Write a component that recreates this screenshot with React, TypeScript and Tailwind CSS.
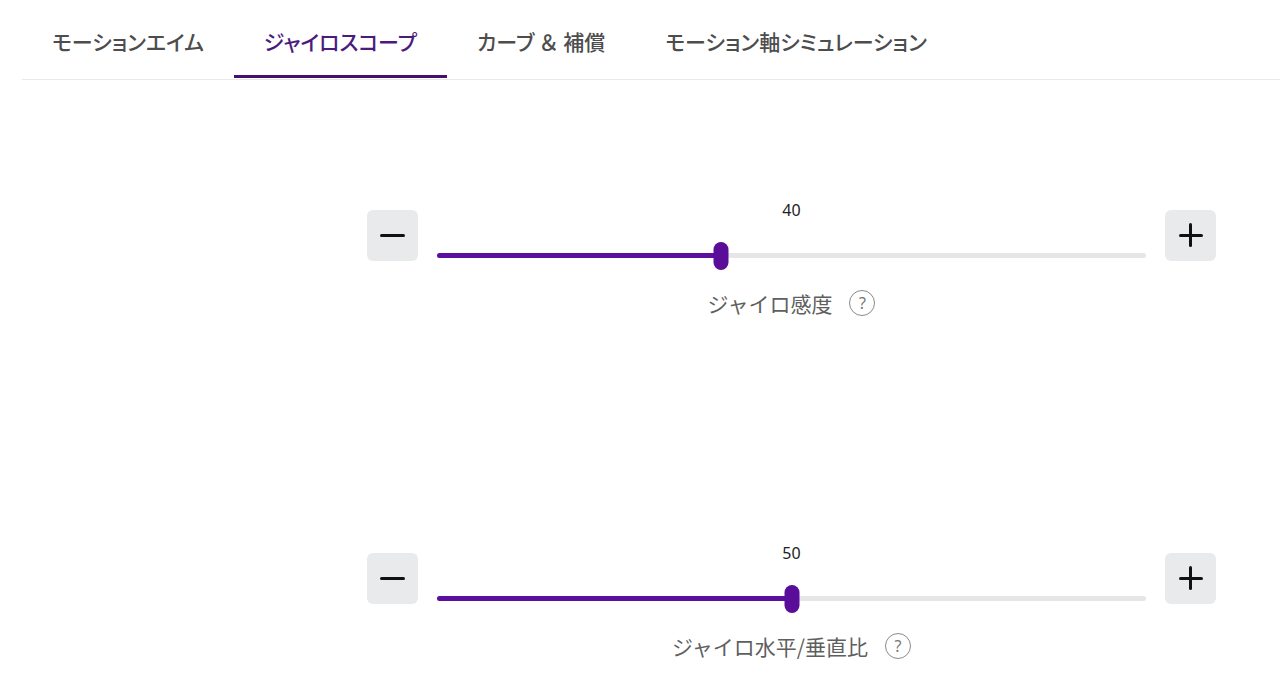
import { useState } from 'react';

const tabs = ['モーションエイム', 'ジャイロスコープ', 'カーブ＆補償', 'モーション軸シミュレーション'];

const jp = "font-['Noto_Sans_CJK_JP','Noto_Sans',sans-serif]";

function QuestionIcon() {
  return (
    <span className="flex h-[26px] w-[26px] items-center justify-center rounded-full border-[1.5px] border-[#8a8a8a] text-[16px] leading-none text-[#777] font-['Noto_Sans',sans-serif]">
      ?
    </span>
  );
}

// full width ampersand keeps its width, the rest gets proportional kana
function TabText({ text }: { text: string }) {
  const parts = text.split('＆');
  if (parts.length === 1) return <>{text}</>;
  return (
    <>
      {parts[0]}
      <span className="px-[4px] [font-feature-settings:normal]">＆</span>
      {parts[1]}
    </>
  );
}

interface SliderProps {
  label: string;
  value: number;
  onChange: (v: number) => void;
}

function SliderBlock({ label, value, onChange }: SliderProps) {
  const pct = value;

  return (
    <div className="flex flex-col items-center">
      <div className="flex items-center gap-[19px]">
        <button
          onClick={() => onChange(Math.max(0, value - 1))}
          className="flex h-[51px] w-[51px] items-center justify-center rounded-md bg-[#e9eaec]"
        >
          <span className="block h-[3px] w-[25px] rounded-full bg-[#111]" />
        </button>

        <div className="flex w-[709px] flex-col">
          <div className="h-5 text-center text-[16px] leading-5 text-[#222] font-['Noto_Sans',sans-serif]">
            {value}
          </div>
          <div className="relative mt-[22px] h-7">
            <div className="absolute left-0 right-0 top-[11px] h-[5px] rounded-full bg-[#e6e6e6]" />
            <div
              className="absolute left-0 top-[11px] h-[5px] rounded-full bg-[#5c0f9f]"
              style={{ width: `${pct}%` }}
            />
            <div
              className="absolute top-0 h-7 w-[15px] -translate-x-1/2 rounded-full bg-[#5a0d98]"
              style={{ left: `${pct}%` }}
            />
          </div>
        </div>

        <button
          onClick={() => onChange(Math.min(100, value + 1))}
          className="relative flex h-[51px] w-[51px] items-center justify-center rounded-md bg-[#e9eaec]"
        >
          <span className="absolute block h-[3px] w-[24px] rounded-full bg-[#111]" />
          <span className="absolute block h-[24px] w-[3px] rounded-full bg-[#111]" />
        </button>
      </div>

      <div className="mt-[20px] flex items-center gap-[17px]">
        <span className={`text-[21px] leading-[26px] text-[#5f5f5f] ${jp}`}>{label}</span>
        <QuestionIcon />
      </div>
    </div>
  );
}

export default function App() {
  const [active, setActive] = useState(1);
  const [sensitivity, setSensitivity] = useState(40);
  const [ratio, setRatio] = useState(50);

  return (
    <div className="h-[693px] w-[1280px] overflow-hidden bg-white">
      <div className="pl-[22px]">
        {/* Tabs */}
        <div className="flex h-20 border-b border-[#e8e8e8]">
          {tabs.map((t, i) => (
            <button
              key={t}
              onClick={() => setActive(i)}
              className={`relative flex items-center px-[30px] pt-[4px] text-[21px] font-medium [font-feature-settings:'palt'] ${jp} ${
                i === active ? 'text-[#4b1a7d]' : 'text-[#4d4d4d]'
              }`}
            >
              <TabText text={t} />
              {i === active && (
                <span className="absolute bottom-[1px] left-0 right-0 h-[3px] bg-[#47106f]" />
              )}
            </button>
          ))}
        </div>

        {/* Sliders */}
        <div className="ml-[345px] w-[849px]">
          <div className="mt-[120px]">
            <SliderBlock label="ジャイロ感度" value={sensitivity} onChange={setSensitivity} />
          </div>
          <div className="mt-[227px]">
            <SliderBlock label="ジャイロ水平/垂直比" value={ratio} onChange={setRatio} />
          </div>
        </div>
      </div>
    </div>
  );
}
